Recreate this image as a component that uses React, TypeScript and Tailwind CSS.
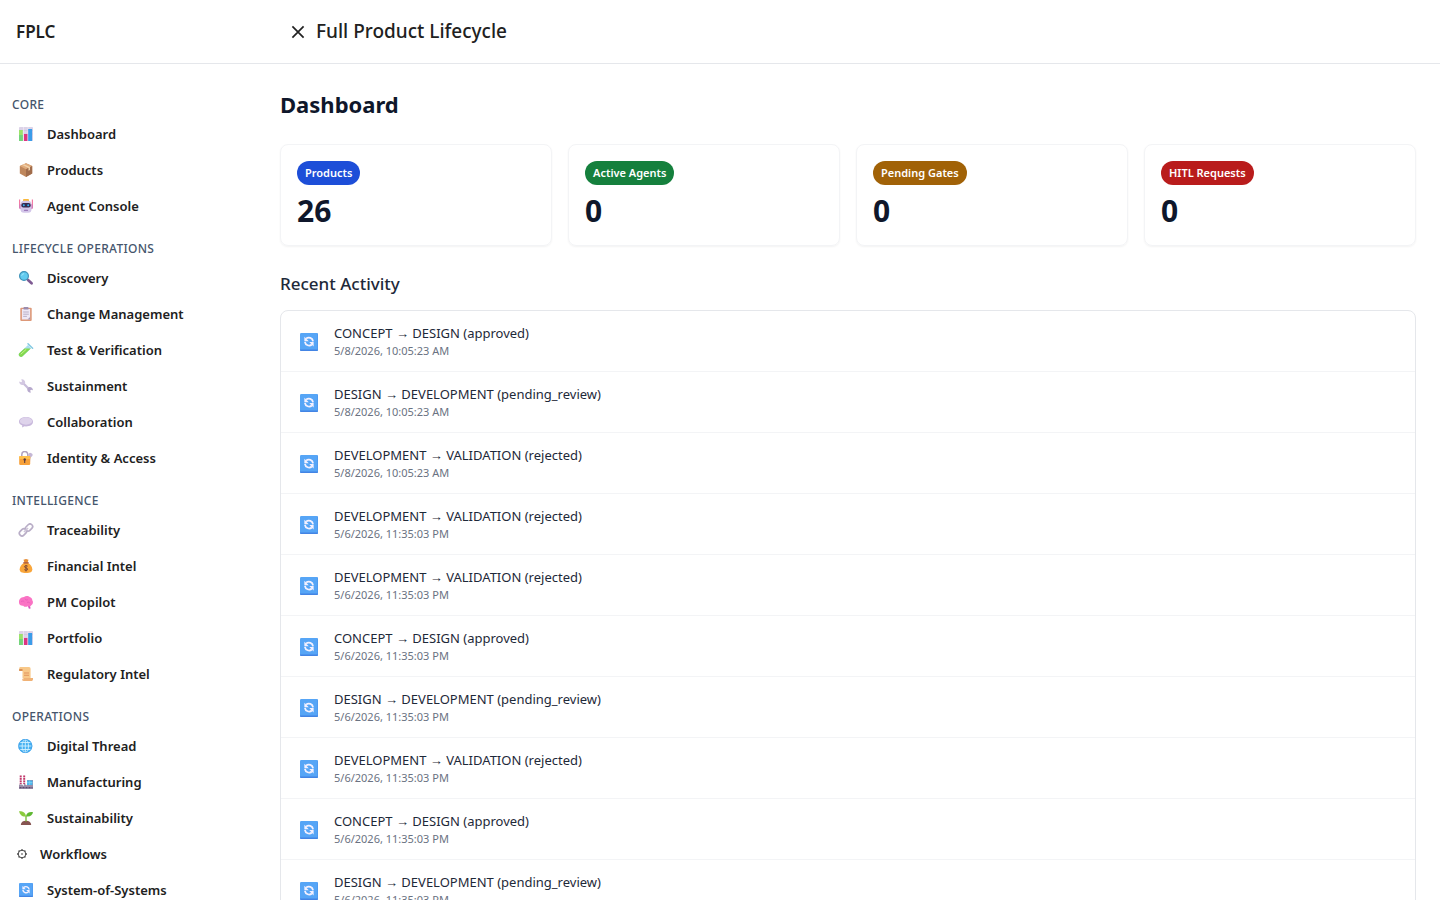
import React from 'react'
import type { ReactNode } from 'react'

type NavItem = { label: string; icon: string }
type NavSection = { title: string; items: NavItem[] }

const sections: NavSection[] = [
  {
    title: 'CORE',
    items: [
      { label: 'Dashboard', icon: 'chart' },
      { label: 'Products', icon: 'box' },
      { label: 'Agent Console', icon: 'robot' },
    ],
  },
  {
    title: 'LIFECYCLE OPERATIONS',
    items: [
      { label: 'Discovery', icon: 'search' },
      { label: 'Change Management', icon: 'clipboard' },
      { label: 'Test & Verification', icon: 'tube' },
      { label: 'Sustainment', icon: 'wrench' },
      { label: 'Collaboration', icon: 'speech' },
      { label: 'Identity & Access', icon: 'lock' },
    ],
  },
  {
    title: 'INTELLIGENCE',
    items: [
      { label: 'Traceability', icon: 'link' },
      { label: 'Financial Intel', icon: 'money' },
      { label: 'PM Copilot', icon: 'brain' },
      { label: 'Portfolio', icon: 'chart' },
      { label: 'Regulatory Intel', icon: 'scroll' },
    ],
  },
  {
    title: 'OPERATIONS',
    items: [
      { label: 'Digital Thread', icon: 'globe' },
      { label: 'Manufacturing', icon: 'factory' },
      { label: 'Sustainability', icon: 'seedling' },
      { label: 'Workflows', icon: 'gear' },
      { label: 'System-of-Systems', icon: 'sync' },
    ],
  },
]

const stats = [
  { label: 'Products', value: 26, color: 'bg-[#1d4ed8]' },
  { label: 'Active Agents', value: 0, color: 'bg-[#15803d]' },
  { label: 'Pending Gates', value: 0, color: 'bg-[#a16207]' },
  { label: 'HITL Requests', value: 0, color: 'bg-[#b91c1c]' },
]

const activity = [
  { text: 'CONCEPT → DESIGN (approved)', time: '5/8/2026, 10:05:23 AM' },
  { text: 'DESIGN → DEVELOPMENT (pending_review)', time: '5/8/2026, 10:05:23 AM' },
  { text: 'DEVELOPMENT → VALIDATION (rejected)', time: '5/8/2026, 10:05:23 AM' },
  { text: 'DEVELOPMENT → VALIDATION (rejected)', time: '5/6/2026, 11:35:03 PM' },
  { text: 'DEVELOPMENT → VALIDATION (rejected)', time: '5/6/2026, 11:35:03 PM' },
  { text: 'CONCEPT → DESIGN (approved)', time: '5/6/2026, 11:35:03 PM' },
  { text: 'DESIGN → DEVELOPMENT (pending_review)', time: '5/6/2026, 11:35:03 PM' },
  { text: 'DEVELOPMENT → VALIDATION (rejected)', time: '5/6/2026, 11:35:03 PM' },
  { text: 'CONCEPT → DESIGN (approved)', time: '5/6/2026, 11:35:03 PM' },
  { text: 'DESIGN → DEVELOPMENT (pending_review)', time: '5/6/2026, 11:35:03 PM' },
]

const syncArt = (
  <>
    <rect x="1" y="1" width="14" height="14" rx="1" fill="#56a5f6" />
    <path d="M1 13.8h14v.2a1 1 0 0 1-1 1H2a1 1 0 0 1-1-1z" fill="#4384e4" />
    <path d="M14.300 1.300h.4v13.400h-.4z" fill="#4a90ea" />
    <g transform="translate(8 7.700) scale(.88) translate(-8 -8)">
      <path d="M5.400 5.400a3.800 3.800 0 0 1 6.200 2.400M10.600 10.600a3.800 3.800 0 0 1-6.200-2.400" fill="none" stroke="#f4f1ff" strokeWidth="1.600" />
      <path d="M3.900 3.700v3.900h3.900zM12.100 12.300V8.400H8.200z" fill="#f4f1ff" />
    </g>
  </>
)

const art: Record<string, ReactNode> = {
  chart: (
    <>
      <rect x="1" y="1" width="14" height="14" rx=".8" fill="#dcd3e8" />
      <path d="M1 4.500h14M1 8h14" stroke="#c9bdda" strokeWidth=".5" />
      <path d="M5.500 1v14M10 1v14" stroke="#efeaf5" strokeWidth=".7" />
      <rect x="1" y="4" width="3.800" height="11" fill="#9be36a" />
      <rect x="1" y="9" width="3.800" height="6" fill="#74d47c" />
      <rect x="6" y="8" width="3.400" height="7" fill="#dd3380" />
      <rect x="10.200" y="3" width="3.900" height="12" fill="#3b9ce9" />
    </>
  ),
  box: (
    <>
      <path d="M8 1.200 14.200 4v7.500L8 15 1.800 11.500V4z" fill="#bf875c" />
      <path d="M8 1.200 14.200 4 8 7.200 1.800 4z" fill="#e0ab7c" />
      <path d="M8 7.200 14.200 4v7.500L8 15z" fill="#a06c4b" />
      <path d="m4.300 2.900 6.200 3v2.800l1.500-.8V5L5.900 2.200z" fill="#f1d2ab" />
    </>
  ),
  robot: (
    <>
      <path d="M1.600 1.500v8M14.400 1.500v8" stroke="#f47ba3" strokeWidth="1.200" />
      <rect x="1" y="6" width="14" height="5" rx="1.500" fill="#d77bb5" />
      <rect x="5" y="1" width="6" height="3" rx="1" fill="#f9b93c" />
      <rect x="2.500" y="2.800" width="11" height="12" rx="3.500" fill="#d3c6e9" />
      <rect x="3.300" y="5" width="9.400" height="4.600" rx="2" fill="#37294f" />
      <circle cx="5.800" cy="7.200" r="1" fill="#35b3f5" />
      <circle cx="10.200" cy="7.200" r="1" fill="#35b3f5" />
      <path d="M6.500 12.200h3" stroke="#8b61ac" strokeWidth="1.100" strokeLinecap="round" />
    </>
  ),
  search: (
    <>
      <path d="m10 10 3.600 3.300" stroke="#7e5a93" strokeWidth="2.700" strokeLinecap="round" />
      <circle cx="6" cy="6" r="4.400" fill="#62cbf0" stroke="#3f92b8" strokeWidth="1.200" />
      <path d="M3.700 5.700a2.500 2.500 0 0 1 2.400-2" stroke="#a5e9fc" fill="none" />
    </>
  ),
  clipboard: (
    <>
      <rect x="2.300" y="1.700" width="11.400" height="13.300" rx="1" fill="#dd9878" />
      <rect x="3.900" y="3" width="8.200" height="10.500" fill="#eee8f5" />
      <rect x="5.500" y="1" width="5" height="2.600" rx=".7" fill="#9b8cae" />
      <path d="M5.200 6h5.600M5.200 8.200h5.600M5.200 10.400h3.700" stroke="#b3a9c2" strokeWidth=".9" />
      <path d="m9.500 13.500 2.600-2.500v2.500z" fill="#a79ab8" />
    </>
  ),
  tube: (
    <>
      <path d="m10 3 3.200 3.200-8.600 8a2.100 2.100 0 0 1-3.100-3.100z" fill="#a8def0" />
      <path d="M6.500 6.400h6.200l-8.100 7.800a2.100 2.100 0 0 1-3.100-3.100z" fill="#83d850" />
      <path d="m3 12 5-4.500" stroke="#c4f58a" strokeLinecap="round" />
      <path d="m10 1.800 4.600 4.400" stroke="#84c9e2" strokeWidth="1.500" strokeLinecap="round" />
    </>
  ),
  wrench: (
    <>
      <path d="m5.500 5.500 5.700 5.700" stroke="#c9bedb" strokeWidth="2.300" />
      <path d="M3.300 1.200 4 3.400 3.200 4.200 1.200 3.500c-.2 2.300 1.700 4 3.900 3.400l2-2C7.600 2.800 5.600.7 3.300 1.200z" fill="#d3c8e2" />
      <path d="M9.300 10.700c-.4 2.300 1.300 4.200 3.500 3.900l-.6-2 .9-.8 1.800.5c.1-2.200-1.800-3.700-3.900-3.200z" fill="#b7a9cd" />
    </>
  ),
  speech: (
    <>
      <path d="M8 3c4 0 7 1.900 7 4.700s-3 4.700-7 4.700l-1.500-.1L4 13.600l.3-2.100C2.200 10.700 1 9.300 1 7.700 1 4.900 4 3 8 3z" fill="#c8b8dc" />
      <ellipse cx="8" cy="7" rx="6.200" ry="3.700" fill="#ded3eb" />
    </>
  ),
  lock: (
    <>
      <path d="M10.500 4.500a2 2 0 1 1 3.500 1.700l-1.500 1.500-.7 6.500h-1.500z" fill="#c5b7d6" />
      <path d="M3.800 7V4.500a3 3 0 0 1 6 0V7" fill="none" stroke="#b0a2bd" strokeWidth="1.500" />
      <rect x="1.200" y="6" width="11" height="9" rx="1.200" fill="#f7a13a" />
      <path d="M1.200 6.800c0-.5.400-.8.900-.8H11c.6 0 1.200.4 1.200 1v2h-11z" fill="#ffc04b" />
      <circle cx="6.700" cy="9.500" r="1.200" fill="#583d43" />
      <path d="M6.700 9.500v3" stroke="#583d43" strokeWidth="1.100" strokeLinecap="round" />
    </>
  ),
  link: (
    <g fill="none" stroke="#b9aec7" strokeWidth="1.700">
      <rect x="1" y="7.700" width="8" height="5.200" rx="2.600" transform="rotate(-45 5 10.300)" />
      <rect x="7" y="3" width="8" height="5.200" rx="2.600" transform="rotate(-45 11 5.600)" />
      <path d="m6 10 4-4" stroke="#cec5d8" />
    </g>
  ),
  money: (
    <>
      <path d="M5.500 1.700 8 1l2.500.7-1 3h-3z" fill="#e68c34" />
      <path d="M6.500 4.700h3c3.300 1.600 4.800 4 4.800 6.500 0 2.700-2 3.800-6.300 3.800s-6.300-1.100-6.300-3.800c0-2.500 1.500-4.900 4.800-6.500z" fill="#f9a63b" />
      <path d="M5.700 4.800h4.600" stroke="#a64e35" strokeWidth="1.200" strokeLinecap="round" />
      <path d="M9.700 8.200c-.8-.8-3.200-.8-3.200.6s3.200.9 3.200 2.300-2.500 1.400-3.400.5M8 7v6.500" fill="none" stroke="#7b4739" />
    </>
  ),
  brain: (
    <>
      <path d="M9.500 11h2.300l.8 3.500-1.700.3z" fill="#d44fc0" />
      <path d="M6 3c1.500-1.500 4.500-1.300 5.600 0 1.700.2 2.800 1.800 2.700 3.300 1.200 1.700.8 4-1 4.900-.7 1.300-2.400 1.700-3.700 1-1.400 1-3.400.9-4.300-.5-2.300.3-4.300-1-4.300-3.300C.8 5.500 2.500 3.200 6 3z" fill="#fa73c4" />
      <path d="M3 7.600c1.300-1 2.700-.7 3.400.3M7 4.700c.3 1.300 1.700 1.700 2.800 1M9 8.500c1.200-.7 2.700-.2 3 .8" fill="none" stroke="#e95dbb" strokeWidth=".9" />
    </>
  ),
  scroll: (
    <>
      <path d="M2.500 1H11c1.100 0 1.600.8 1.600 2v9.500H4.500V5H1.200V2.700C1.200 1.700 1.700 1 2.500 1z" fill="#f8c889" />
      <path d="M1.200 3v2h3.300V3z" fill="#d88e55" />
      <path d="M5.500 12H15v1.200c0 1.200-.7 1.800-1.700 1.800H5.700C4.600 15 4 14.300 4 13.300h1.500z" fill="#f0b276" />
      <path d="M6 7h5M6 9.300h5" stroke="#e0925e" strokeWidth="1.100" />
    </>
  ),
  globe: (
    <>
      <circle cx="7.300" cy="8" r="7" fill="#45b1f2" />
      <g fill="none" stroke="#d3f0ff" strokeWidth=".9">
        <ellipse cx="7.300" cy="8" rx="3.200" ry="6.500" />
        <path d="M7.300 1v14M.3 8h14M1.500 4.500h11.600M1.500 11.500h11.600" />
      </g>
      <circle cx="7.300" cy="8" r="6.600" fill="none" stroke="#3d9ee9" strokeWidth=".8" />
    </>
  ),
  factory: (
    <>
      <path d="M2.700 1.500V11M6.200 1.500V11" stroke="#ecdfe9" strokeWidth="1.900" />
      <path d="M2.700 1.500V10M6.200 1.500V10" stroke="#c43668" strokeWidth="1.900" strokeDasharray="1.700 .8" />
      <path d="M1 10.500h3l2 1.500V9.500l3 2V6h6v9H1z" fill="#9b8eaa" />
      <rect x="9" y="6.500" width="5.500" height="4.500" fill="#49b5ed" />
      <path d="M11.700 6.500V11M9 8.700h5.500" stroke="#9ddcf5" strokeWidth=".6" />
      <path d="M1.500 13.700h13" stroke="#5c496d" strokeWidth="1.200" strokeDasharray="2 1" />
    </>
  ),
  seedling: (
    <>
      <path d="M2.800 15c0-2.900 2.200-4.300 5.200-4.300s5.200 1.400 5.200 4.300z" fill="#865451" />
      <path d="M8 11.500V5.700" stroke="#72b82e" strokeWidth="1.300" />
      <path d="M8 6.500C3.800 7 2 4.600 1 1.200 5 1 7.500 2.300 8 6.500z" fill="#8bcb3d" />
      <path d="M8 6.300C8.500 3 11 1.700 15 2.200c-.7 3-2.800 4.900-7 4.100z" fill="#5fb832" />
    </>
  ),
  sync: syncArt,
}

const NavIcon = ({ name }: { name: string }) => {
  if (name === 'gear') {
    return (
      <span className="flex w-3 shrink-0">
        <svg className="h-3 w-3" viewBox="0 1 12 12" fill="none" stroke="#333" aria-hidden="true">
          <circle cx="6" cy="6" r="3.800" strokeWidth=".9" />
          <circle cx="6" cy="6" r=".8" fill="#333" stroke="none" />
          <path
            d="M6 1.200v1.200M6 9.600v1.200M1.200 6h1.200M9.600 6h1.200M2.600 2.600l.8.800M8.600 8.600l.8.800M2.600 9.400l.8-.8M8.600 3.400l.8-.8"
            strokeWidth="1.300"
          />
        </svg>
      </span>
    )
  }
  return (
    <span className="flex w-[19px] shrink-0 pl-0.5">
      <svg className="h-4 w-4 shrink-0" viewBox="0 1 16 16" aria-hidden="true">
        {art[name]}
      </svg>
    </span>
  )
}

const Sidebar = () => {
  return (
    <aside className="flex w-64 shrink-0 flex-col">
      <div className="flex h-16 shrink-0 items-center border-b border-gray-200 px-4">
        <span className="text-[17px] font-semibold">FPLC</span>
      </div>
      <nav className="flex flex-1 flex-col gap-4 overflow-y-auto px-3 pt-[33px] [scrollbar-width:none]">
        {sections.map((section) => (
          <div key={section.title}>
            <h3 className="mb-1 text-xs font-medium tracking-wide text-slate-600">{section.title}</h3>
            <ul>
              {section.items.map((item) => (
                <li key={item.label}>
                  <a href="#" className="flex h-9 items-center gap-3 px-1 text-[13px] font-semibold">
                    <NavIcon name={item.icon} />
                    {item.label}
                  </a>
                </li>
              ))}
            </ul>
          </div>
        ))}
      </nav>
    </aside>
  )
}

const StatCard = ({ label, value, color }: { label: string; value: number; color: string }) => {
  return (
    <div className="flex flex-col items-start gap-2 rounded-lg border border-gray-100 p-4 shadow-xs">
      <span className={`rounded-full px-2 py-1 text-[11px] leading-4 font-semibold text-white ${color}`}>{label}</span>
      <span className="text-3xl leading-9 font-bold text-slate-900">{value}</span>
    </div>
  )
}

const App = () => {
  return (
    <div className="flex h-screen overflow-hidden bg-white font-['Segoe_UI','Noto_Sans',sans-serif] text-[#212121]">
      <Sidebar />
      <div className="flex min-w-0 flex-1 flex-col">
        <header className="flex h-16 shrink-0 items-center border-b border-gray-200 px-8">
          <button type="button" aria-label="Close menu" className="flex h-5 w-5 items-center justify-center">
            <svg className="h-4 w-4" viewBox="0 0 16 16" fill="none" stroke="#212121" strokeWidth="1.700" aria-hidden="true">
              <path d="m2.400 2.400 11.200 11.200M13.600 2.400 2.400 13.600" />
            </svg>
          </button>
          <h1 className="ml-2 text-[19px] font-medium">Full Product Lifecycle</h1>
        </header>
        <main className="flex-1 overflow-y-auto p-6 [scrollbar-width:none]">
          <h2 className="mb-6 text-[22px] leading-8 font-bold text-slate-900">Dashboard</h2>
          <div className="mb-6 grid grid-cols-4 gap-4">
            {stats.map((stat) => (
              <StatCard key={stat.label} {...stat} />
            ))}
          </div>
          <h3 className="mb-3 text-[17px] leading-7 font-medium text-gray-800">Recent Activity</h3>
          <ul className="divide-y divide-gray-100 rounded-lg border border-gray-200">
            {activity.map((entry, i) => (
              <li key={i} className="flex items-center gap-3 px-4 py-3">
                <span className="flex w-[25px] shrink-0 pl-0.5">
                  <svg className="h-5 w-5" viewBox="0.22 -0.56 15.56 15.56" aria-hidden="true">
                    {syncArt}
                  </svg>
                </span>
                <div>
                  <p className="text-[13px] leading-5 text-gray-800">{entry.text}</p>
                  <p className="text-[11px] leading-4 text-gray-500">{entry.time}</p>
                </div>
              </li>
            ))}
          </ul>
        </main>
      </div>
    </div>
  )
}

export default App
